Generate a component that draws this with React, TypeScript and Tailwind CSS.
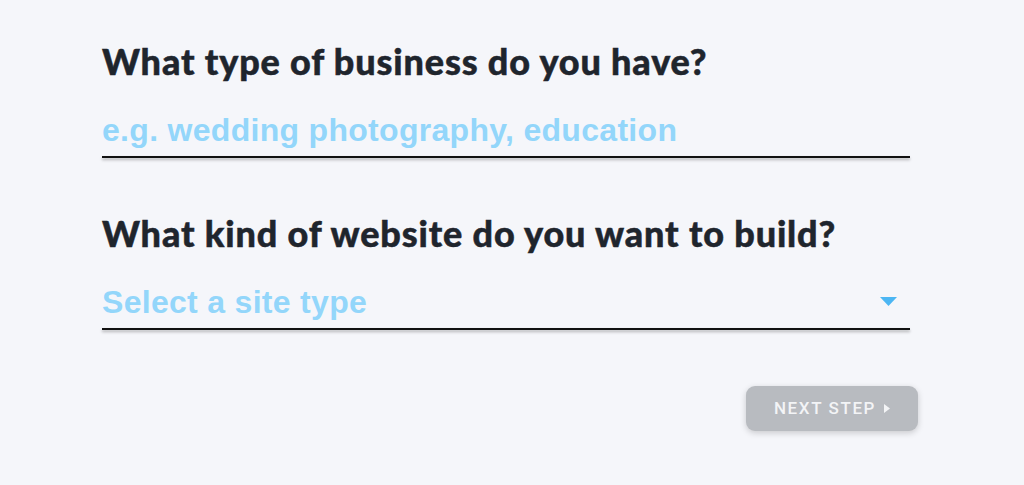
import { useState } from 'react'

const headingClass =
  "text-[36px] leading-[48px] font-black tracking-[0.85px] text-[#1f252d] [-webkit-text-stroke:0.5px_#1f252d] font-['Lato','Noto_Sans',sans-serif]"
const fieldClass =
  "block w-full bg-transparent pb-[6px] text-[32px] leading-[40px] font-bold tracking-[0.3px] outline-none font-['Liberation_Sans',Arial,sans-serif]"

function Underline() {
  return <div className="h-[2px] bg-[#111] shadow-[0_2px_3px_rgba(0,0,0,0.3)]" />
}

export default function App() {
  const [business, setBusiness] = useState('')
  const [site, setSite] = useState('')

  return (
    <div className="min-h-[485px] w-full bg-[#f5f6fa]">
      <div className="ml-[102px] w-[808px] pt-[37px]">
        <h2 className={headingClass}>What type of business do you have?</h2>
        <div className="mt-[25px]">
          <input
            className={fieldClass + ' text-[#1f252d] placeholder:text-[#93d6fa]'}
            placeholder="e.g. wedding photography, education"
            value={business}
            onChange={(e) => setBusiness(e.target.value)}
          />
          <Underline />
        </div>

        <h2 className={headingClass + ' mt-[51px]'}>What kind of website do you want to build?</h2>
        <div className="relative mt-[25px]">
          <select
            className={fieldClass + ' appearance-none text-[#93d6fa]'}
            value={site}
            onChange={(e) => setSite(e.target.value)}
          >
            <option value="">Select a site type</option>
            <option value="blog">Blog</option>
            <option value="store">Online store</option>
            <option value="portfolio">Portfolio</option>
          </select>
          <svg className="pointer-events-none absolute right-[13px] top-[15px]" width="17" height="9" viewBox="0 0 17 9">
            <path d="M0 0 H17 L8.5 9 Z" fill="#4cb6f3" />
          </svg>
          <Underline />
        </div>

        <div className="mt-[56px] flex justify-end -mr-[8px]">
          <button className="flex h-[45px] w-[172px] items-center justify-center gap-[8px] rounded-[9px] bg-[#b8bbc0] text-[17px] font-medium tracking-[1.6px] text-[#f3f4f6] shadow-[0_2px_6px_rgba(0,0,0,0.18)] font-['Roboto',sans-serif]">
            NEXT STEP
            <svg width="6" height="9" viewBox="0 0 6 9">
              <path d="M0 0 L6 4.5 L0 9 Z" fill="#f3f4f6" />
            </svg>
          </button>
        </div>
      </div>
    </div>
  )
}
